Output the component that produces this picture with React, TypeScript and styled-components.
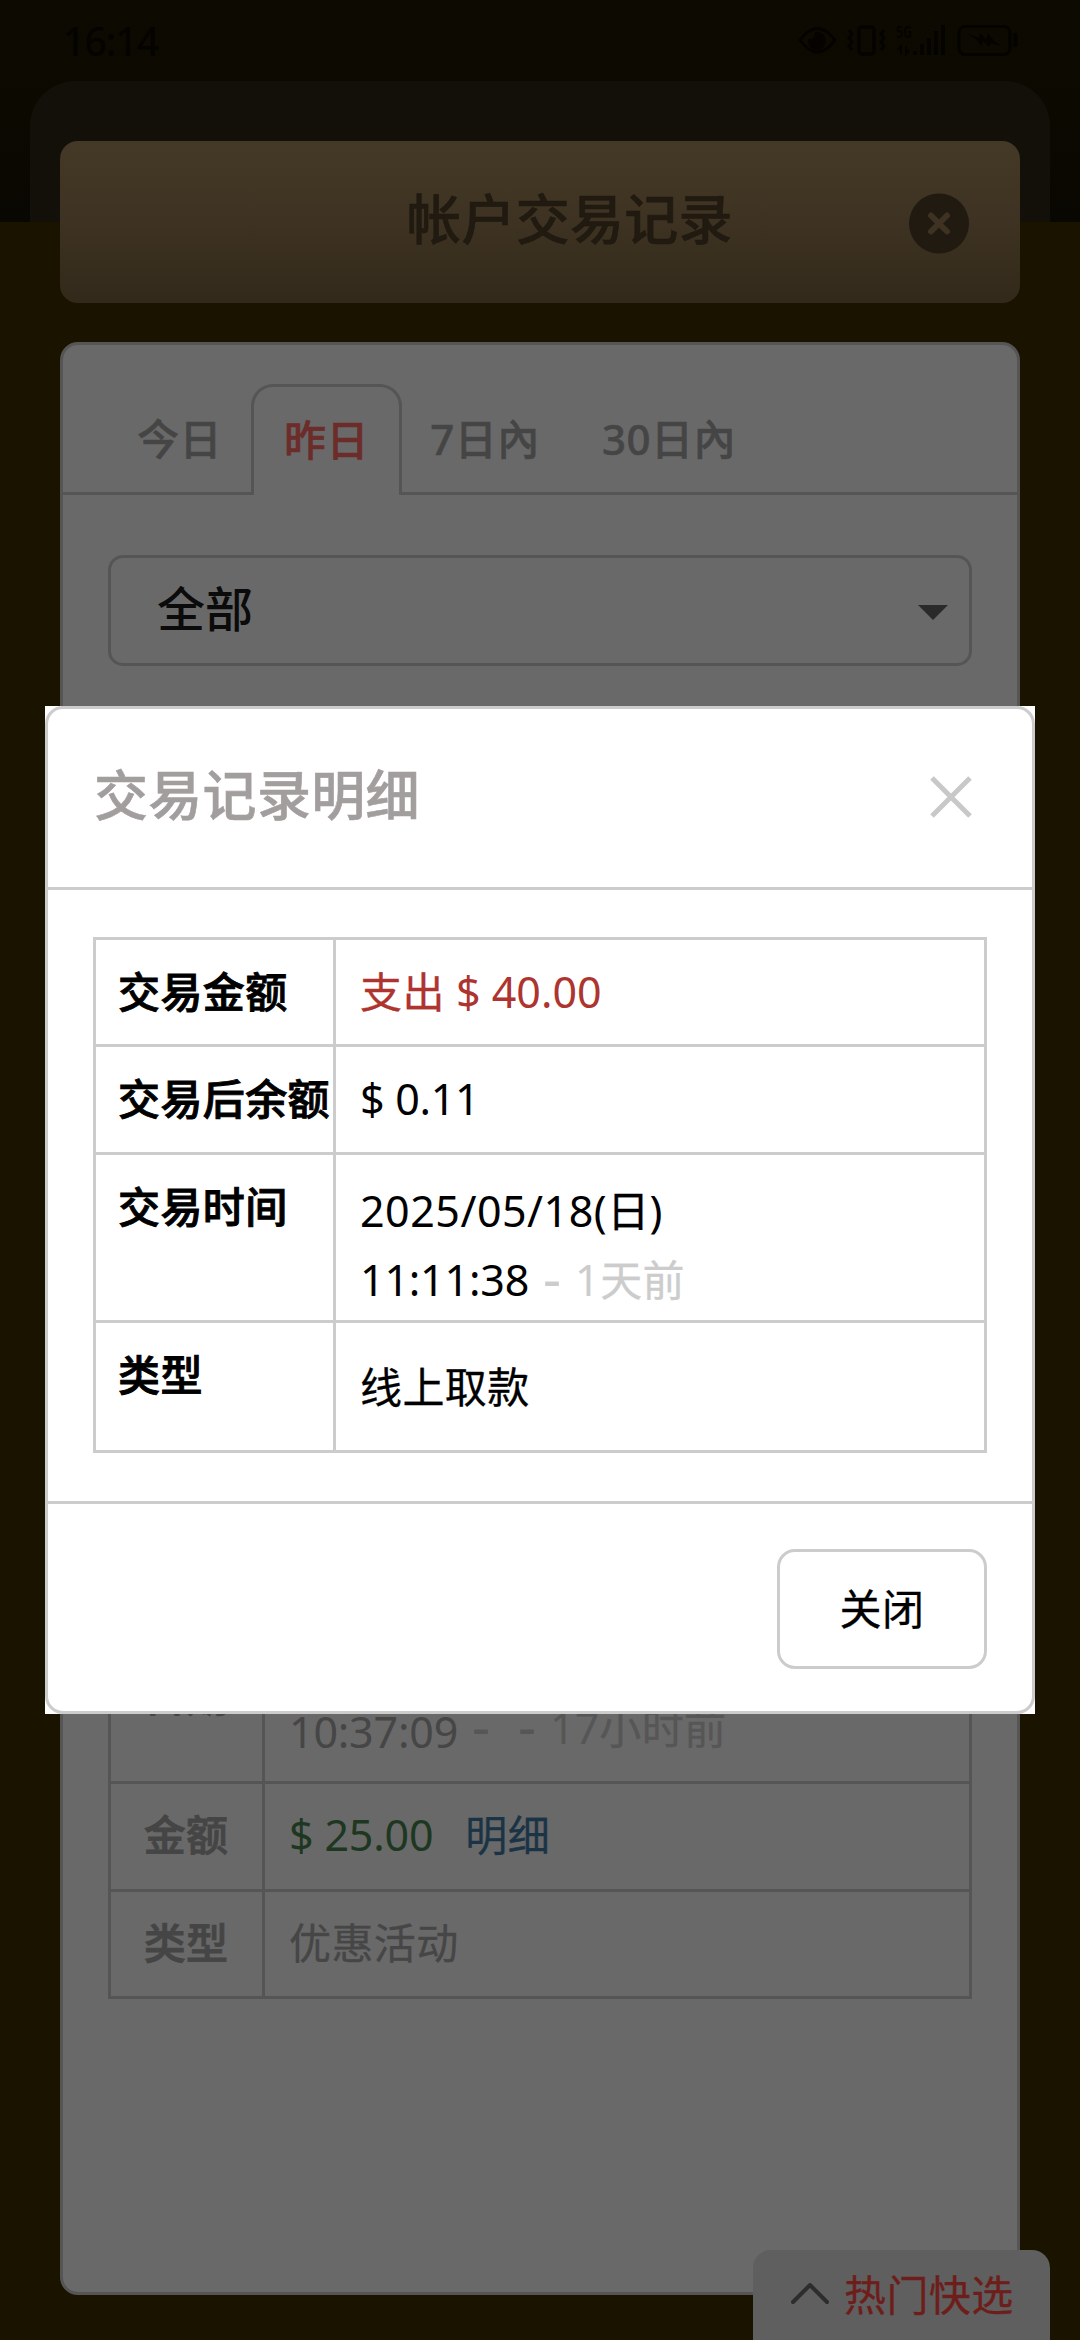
import React from "react";
import styled, { createGlobalStyle } from "styled-components";

const GlobalStyle = createGlobalStyle`
  *, *::before, *::after { box-sizing: border-box; }
  body {
    margin: 0;
    background: #1a1300;
    font-family: "Noto Sans", "Noto Sans CJK SC", sans-serif;
    font-size: 42px;
    line-height: 69px;
  }
`;

const Screen = styled.div`
  position: relative;
  width: 1080px;
  height: 2340px;
  overflow: hidden;
  background: #1a1300;
`;

const TopBackdrop = styled.div`
  position: absolute;
  inset: 0 0 auto 0;
  height: 222px;
  padding: 81px 30px 0;
  background: linear-gradient(#0d0a01 0%, #0c0901 50%, #090701 100%);
`;

const TopSheet = styled.div`
  height: 141px;
  border-radius: 45px 45px 0 0;
  background: #13100a;
`;

const Page = styled.div`
  position: relative;
  height: 100%;
  padding: 0 60px 45px;
  display: flex;
  flex-direction: column;
`;

const StatusBar = styled.div`
  height: 81px;
  margin-left: 3px;
  display: flex;
  align-items: center;
  justify-content: space-between;
  color: #040300;
`;

const Clock = styled.span`
  font-size: 39px;
  font-weight: 500;
  letter-spacing: -0.9px;
`;

const TitleBar = styled.header`
  height: 162px;
  margin-top: 60px;
  padding: 0 51px;
  flex: none;
  display: grid;
  grid-template-columns: 120px 1fr 60px;
  align-items: center;
  border-radius: 18px;
  background: linear-gradient(#443826, #3e3322 50%, #32291a);
`;

const PageTitle = styled.h1`
  grid-column: 2;
  margin: 0 0 5px;
  text-align: center;
  font-size: 54px;
  font-weight: 500;
  letter-spacing: 0.3px;
  -webkit-text-stroke: 0.6px;
  color: #201a10;
`;

const TitleClose = styled.svg`
  margin-top: 3px;
`;

const Panel = styled.main`
  flex: 1;
  margin-top: 39px;
  border: 3px solid #555;
  border-radius: 18px;
  background: #696969;
`;

const Tabs = styled.nav`
  height: 150px;
  padding: 39px 0 0 45px;
  display: flex;
  border-bottom: 3px solid #555;
`;

const Tab = styled.a<{ $active?: boolean; $width: number }>`
  width: ${(p) => p.$width}px;
  height: ${(p) => (p.$active ? 111 : 108)}px;
  padding-top: ${(p) => (p.$active ? 18 : 17)}px;
  text-align: center;
  font-weight: 500;
  letter-spacing: 0.5px;
  -webkit-text-stroke: 0.5px;
  color: ${(p) => (p.$active ? "#6c2c29" : "#454545")};
  border: 3px solid ${(p) => (p.$active ? "#555" : "transparent")};
  border-bottom: 0;
  border-radius: 22px 22px 0 0;
  background: #696969;
`;

const Select = styled.div`
  height: 111px;
  margin: 60px 45px 0;
  padding: 0 21px 4px 46px;
  display: flex;
  align-items: center;
  justify-content: space-between;
  border: 3px solid #555;
  border-radius: 15px;
  font-size: 48px;
  font-weight: 500;
  color: #0b0b0b;
`;

const Caret = styled.span`
  margin-top: 8px;
  border: 15px solid transparent;
  border-top-color: #2a2a2a;
  border-bottom-width: 0;
`;

const Records = styled.div`
  margin: 942px 45px 0;
  border: 3px solid #555;
`;

const Record = styled.div<{ $height: number }>`
  height: ${(p) => p.$height}px;
  display: grid;
  grid-template-columns: 154px 1fr;
  & + & { border-top: 3px solid #555; }
`;

const RecordLabel = styled.div<{ $top?: number }>`
  padding: ${(p) => p.$top ?? 16}px 1px 0 0;
  border-right: 3px solid #555;
  text-align: center;
  font-weight: 500;
  letter-spacing: 0.3px;
  -webkit-text-stroke: 0.9px;
  color: #454545;
`;

const RecordValue = styled.div<{ $top?: number }>`
  padding: ${(p) => p.$top ?? 16}px 24px 0;
  color: #464646;
`;

const Line = styled.div`
  display: flex;
  height: 69px;
  white-space: pre;
`;

const Num = styled.span<{ $color?: string; $gap?: number; $track?: number }>`
  font-size: 43px;
  letter-spacing: ${(p) => p.$track ?? 0.5}px;
  margin-left: ${(p) => p.$gap ?? 0}px;
  color: ${(p) => p.$color ?? "inherit"};
`;

const Dash = styled(Num)`
  width: 16px;
  font-size: 56px;
  line-height: 64px;
`;

const Han = styled.span<{ $color?: string; $gap?: number }>`
  letter-spacing: 0.4px;
  -webkit-text-stroke: 0.3px;
  margin-left: ${(p) => p.$gap ?? 0}px;
  color: ${(p) => p.$color ?? "inherit"};
`;

const Ago = styled.span`
  display: flex;
  margin-top: -4px;
  color: #565656;
`;

const QuickPick = styled.button`
  position: absolute;
  right: 30px;
  bottom: 0;
  width: 297px;
  height: 90px;
  padding: 0 0 2px 38px;
  display: flex;
  align-items: center;
  gap: 15px;
  border: 0;
  border-radius: 18px 18px 0 0;
  background: #5f5f5f;
  font: inherit;
  letter-spacing: 0.4px;
  -webkit-text-stroke: 0.3px;
  color: #6d1e1b;
`;

const Overlay = styled.div`
  position: absolute;
  inset: 0;
  padding: 706px 45px 0;
`;

const DialogBox = styled.div`
  height: 1008px;
  background: #fff;
`;

const Dialog = styled.section`
  height: 100%;
  display: flex;
  flex-direction: column;
  border: 3px solid #ccc;
  border-radius: 18px;
`;

const DialogHead = styled.header`
  height: 181px;
  padding: 0 60px 3px 46px;
  display: flex;
  align-items: center;
  justify-content: space-between;
  border-bottom: 3px solid #ccc;
`;

const DialogTitle = styled.h2`
  margin: 0 0 3px;
  font-size: 54px;
  font-weight: 500;
  letter-spacing: 0.3px;
  -webkit-text-stroke: 0.6px;
  color: #a29e9d;
`;

const Details = styled.div`
  margin: 47px 45px 48px;
  border: 3px solid #ccc;
`;

const Detail = styled.div<{ $height: number }>`
  height: ${(p) => p.$height}px;
  display: grid;
  grid-template-columns: 240px 1fr;
  & + & { border-top: 3px solid #ccc; }
`;

const DetailLabel = styled.div`
  padding: 17px 0 0 22px;
  border-right: 3px solid #ccc;
  font-weight: 500;
  letter-spacing: 0.4px;
  -webkit-text-stroke: 0.9px;
  white-space: nowrap;
  color: #000;
`;

const DetailValue = styled.div<{ $top?: number }>`
  padding: ${(p) => p.$top ?? 17}px 24px 0;
  color: #000;
`;

const DialogFoot = styled.footer`
  flex: 1;
  padding: 45px 45px 0;
  display: flex;
  justify-content: flex-end;
  align-items: flex-start;
  border-top: 3px solid #ccc;
`;

const CloseButton = styled.button`
  width: 210px;
  height: 120px;
  padding: 0 0 2px;
  border: 3px solid #ccc;
  border-radius: 18px;
  background: #fff;
  font: inherit;
  letter-spacing: 0.4px;
  -webkit-text-stroke: 0.3px;
  color: #000;
`;

const NetworkLabel = styled.text`
  font-size: 16px;
  font-weight: 700;
  line-height: 1;
  fill: #040300;
  stroke: none;
`;

const RED = "#ae3430";
const MUTED = "#ccc";

const StatusIcons = () => (
  <svg width="222" height="40" viewBox="797 21 222 40" fill="none" stroke="#040300" overflow="visible">
    <path d="M799 40Q816 17 834 40Q816 64 799 40Z" strokeWidth="3" />
    <path d="M814 32a9 9 0 1 1-7 7q7 1 7-7z" fill="#040300" stroke="none" />
    <rect x="858" y="27" width="15" height="27" rx="3" strokeWidth="3.500" />
    <path d="M848 30l3 4-3 4 3 4-3 4 3 4M883 30l-3 4 3 4-3 4 3 4-3 4" strokeWidth="3" />
    <path d="M900 54v-8l-3 4M905 46v8l3-4" strokeWidth="2" />
    <path d="M914 55v-4M921 55v-11M928 55v-17M935 55v-24M942 55v-30" strokeWidth="4" />
    <NetworkLabel x="895" y="38" textLength="16" lengthAdjust="spacingAndGlyphs">5G</NetworkLabel>
    <rect x="958" y="26.500" width="51" height="28" rx="6" strokeWidth="3" />
    <path d="M1014.500 33v14" strokeWidth="4" />
    <path d="M965 33l13 5 1-5 6 6 2-6 5 7 8 6-10-3-2 4-6-6-2 5-5-7z" fill="#040300" stroke="none" />
  </svg>
);

export default function App() {
  return (
    <>
      <GlobalStyle />
      <Screen>
        <TopBackdrop>
          <TopSheet />
        </TopBackdrop>
        <Page>
          <StatusBar>
            <Clock>16:14</Clock>
            <StatusIcons />
          </StatusBar>
          <TitleBar>
            <PageTitle>帐户交易记录</PageTitle>
            <TitleClose width="60" height="61" viewBox="0 0 60 61">
              <ellipse cx="30" cy="30.500" rx="30" ry="30" fill="#201a10" />
              <path d="M22 22.500l16 16M38 22.500l-16 16" stroke="#3e3322" strokeWidth="6" strokeLinecap="round" />
            </TitleClose>
          </TitleBar>
          <Panel>
            <Tabs>
              <Tab $width={143}>今日</Tab>
              <Tab $width={151} $active>昨日</Tab>
              <Tab $width={166}>7日內</Tab>
              <Tab $width={202}>30日內</Tab>
            </Tabs>
            <Select>
              全部
              <Caret />
            </Select>
            <Records>
              <Record $height={170}>
                <RecordLabel $top={50}>日期</RecordLabel>
                <RecordValue $top={17}>
                  <Line><Num>2025/05/18</Num></Line>
                  <Line>
                    <Num $track={-0.2}>10:37:09</Num>
                    <Ago>
                      <Dash $gap={14}>-</Dash>
                      <Dash $gap={30}>-</Dash>
                      <Num $gap={16} $track={0}>17</Num>
                      <Han>小时前</Han>
                    </Ago>
                  </Line>
                </RecordValue>
              </Record>
              <Record $height={108}>
                <RecordLabel>金额</RecordLabel>
                <RecordValue>
                  <Line>
                    <Num $color="#1d3720" $track={-0.2}>$ 25.00</Num>
                    <Han $gap={32} $color="#1b3445">明细</Han>
                  </Line>
                </RecordValue>
              </Record>
              <Record $height={107}>
                <RecordLabel>类型</RecordLabel>
                <RecordValue>
                  <Line><Han>优惠活动</Han></Line>
                </RecordValue>
              </Record>
            </Records>
          </Panel>
        </Page>
        <QuickPick>
          <svg width="38" height="24" viewBox="0 0 38 24" fill="none" stroke="#2d2d2d" strokeWidth="4" strokeLinecap="round" strokeLinejoin="round">
            <path d="M2 20L19 3l17 17" />
          </svg>
          热门快选
        </QuickPick>
        <Overlay>
          <DialogBox>
            <Dialog>
              <DialogHead>
                <DialogTitle>交易记录明细</DialogTitle>
                <svg width="42" height="42" viewBox="0 0 42 42" stroke="#c8c8c8" strokeWidth="5">
                  <path d="M2 2l38 38M40 2L2 40" />
                </svg>
              </DialogHead>
              <Details>
                <Detail $height={104}>
                  <DetailLabel>交易金额</DetailLabel>
                  <DetailValue>
                    <Line>
                      <Han $color={RED}>支出</Han>
                      <Num $color={RED} $track={0}> $ 40.00</Num>
                    </Line>
                  </DetailValue>
                </Detail>
                <Detail $height={108}>
                  <DetailLabel>交易后余额</DetailLabel>
                  <DetailValue>
                    <Line><Num $track={-0.3}>$ 0.11</Num></Line>
                  </DetailValue>
                </Detail>
                <Detail $height={168}>
                  <DetailLabel>交易时间</DetailLabel>
                  <DetailValue $top={21}>
                    <Line>
                      <Num>2025/05/18(</Num>
                      <Han>日</Han>
                      <Num>)</Num>
                    </Line>
                    <Line>
                      <Num $track={-0.2}>11:11:38</Num>
                      <Dash $gap={14} $color={MUTED}>-</Dash>
                      <Num $gap={16} $color={MUTED}>1</Num>
                      <Han $color={MUTED}>天前</Han>
                    </Line>
                  </DetailValue>
                </Detail>
                <Detail $height={130}>
                  <DetailLabel>类型</DetailLabel>
                  <DetailValue $top={29}>
                    <Line><Han>线上取款</Han></Line>
                  </DetailValue>
                </Detail>
              </Details>
              <DialogFoot>
                <CloseButton>关闭</CloseButton>
              </DialogFoot>
            </Dialog>
          </DialogBox>
        </Overlay>
      </Screen>
    </>
  );
}
